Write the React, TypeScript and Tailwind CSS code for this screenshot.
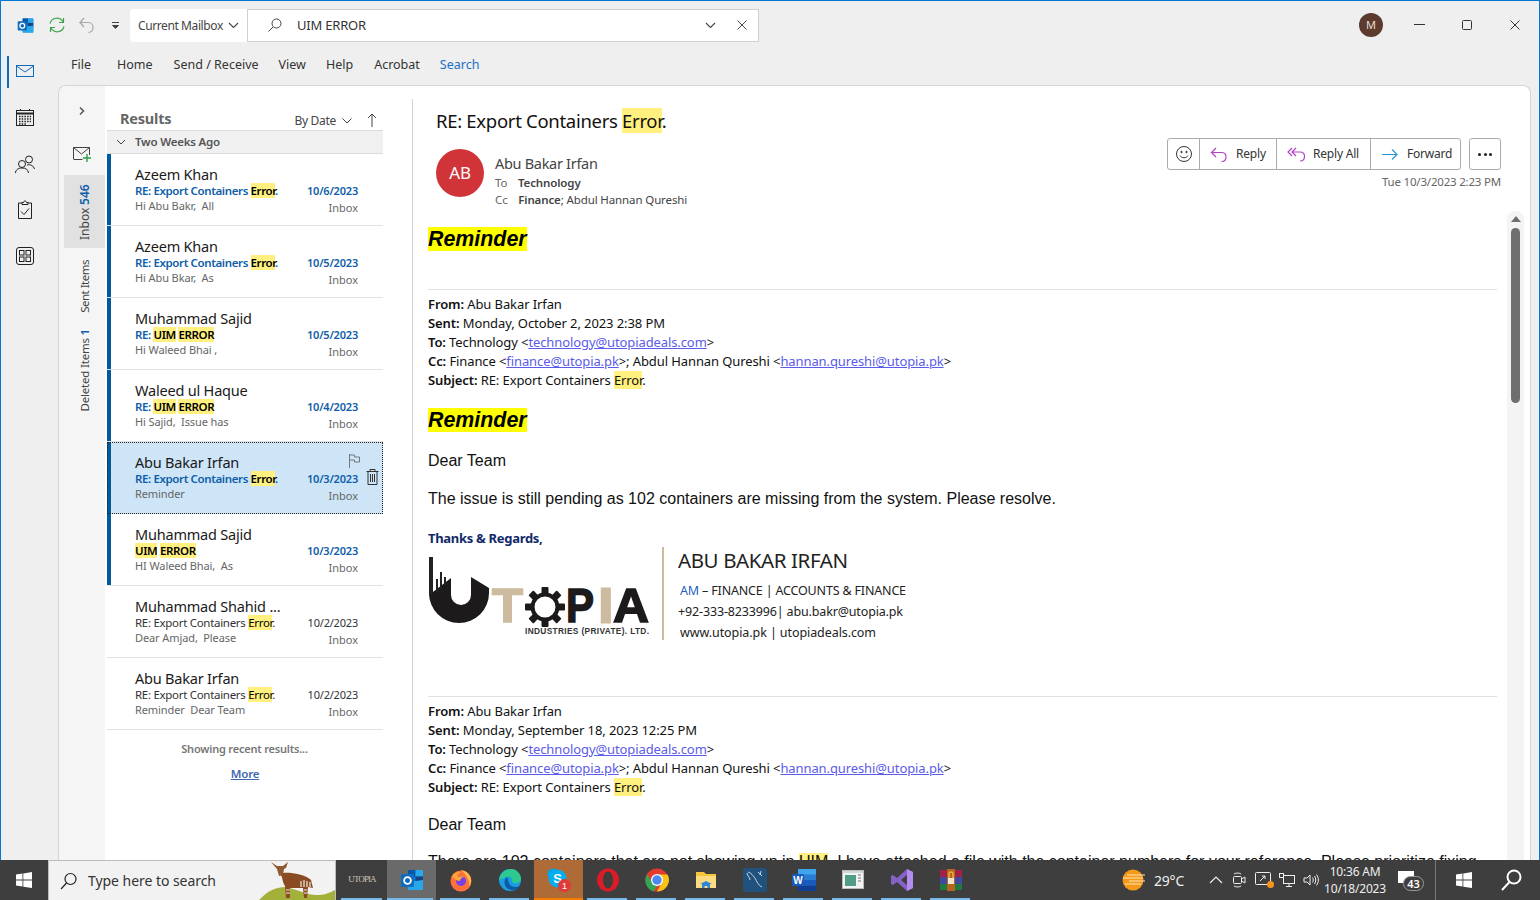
import React from "react";

type Part = { t: string; h?: boolean };
type Row = { name: string; subject: Part[]; preview: string; date: string; unread: boolean; selected?: boolean };

const exportSubject: Part[] = [{ t: "RE: Export Containers " }, { t: "Error", h: true }, { t: "." }];
const uimSubject: Part[] = [{ t: "RE: " }, { t: "UIM", h: true }, { t: " " }, { t: "ERROR", h: true }];

const rows: Row[] = [
  { name: "Azeem Khan", subject: exportSubject, preview: "Hi Abu Bakr,  All", date: "10/6/2023", unread: true },
  { name: "Azeem Khan", subject: exportSubject, preview: "Hi Abu Bkar,  As", date: "10/5/2023", unread: true },
  { name: "Muhammad Sajid", subject: uimSubject, preview: "Hi Waleed Bhai ,", date: "10/5/2023", unread: true },
  { name: "Waleed ul Haque", subject: uimSubject, preview: "Hi Sajid,  Issue has", date: "10/4/2023", unread: true },
  { name: "Abu Bakar Irfan", subject: exportSubject, preview: "Reminder", date: "10/3/2023", unread: true, selected: true },
  { name: "Muhammad Sajid", subject: [{ t: "UIM", h: true }, { t: " " }, { t: "ERROR", h: true }], preview: "HI Waleed Bhai,  As", date: "10/3/2023", unread: true },
  { name: "Muhammad Shahid ...", subject: exportSubject, preview: "Dear Amjad,  Please", date: "10/2/2023", unread: false },
  { name: "Abu Bakar Irfan", subject: exportSubject, preview: "Reminder  Dear Team", date: "10/2/2023", unread: false },
];

function Subject({ parts, unread }: { parts: Part[]; unread: boolean }) {
  return (
    <div className={unread ? "text-[11.5px] leading-[15px] font-semibold text-[#0f5ea8] whitespace-pre tracking-[-0.38px]" : "text-[11.5px] leading-[15px] text-[#333333] whitespace-pre tracking-[-0.3px]"}>
      {parts.map((p, i) =>
        p.h ? (
          <span key={i} className="bg-[#fff07f] text-black">
            {p.t}
          </span>
        ) : (
          <span key={i}>{p.t}</span>
        )
      )}
    </div>
  );
}

function MailRow({ r }: { r: Row }) {
  return (
    <div className={r.selected ? "relative h-[72px] flex shrink-0 bg-[#cde5f7] outline-1 outline-dotted outline-[#222222] -outline-offset-1" : "relative h-[72px] flex shrink-0 border-b border-[#e1e1e1]"}>
      <div className={r.unread ? "w-[4px] bg-[#005a9e] shrink-0" : "w-[4px] shrink-0"} />
      <div className="flex-1 pl-[24px] pt-[11px] min-w-0">
        <div className="text-[14.5px] leading-[18px] text-[#1a1a1a] tracking-[-0.2px] whitespace-pre">{r.name}</div>
        <Subject parts={r.subject} unread={r.unread} />
        <div className="text-[11px] leading-[15px] text-[#666666] whitespace-pre tracking-[-0.1px]">{r.preview}</div>
      </div>
      <div className="w-[70px] mr-[25px] pt-[29px] text-right shrink-0">
        <div className={r.unread ? "text-[11px] leading-[15px] font-semibold text-[#0f5ea8] tracking-[-0.2px]" : "text-[11px] leading-[15px] text-[#333333] tracking-[-0.2px]"}>{r.date}</div>
        <div className="mt-[2px] text-[11px] leading-[15px] text-[#666666]">Inbox</div>
      </div>
      {r.selected && (
        <>
          <svg className="absolute left-[241px] top-[11px]" width="13" height="16" viewBox="0 0 13 16" fill="none" stroke="#777777" strokeWidth="1">
            <path d="M1.5 1v14M1.5 2h5v2h5v5h-5v-2h-5" />
          </svg>
          <svg className="absolute left-[259px] top-[27px]" width="13" height="16" viewBox="0 0 13 16" fill="none" stroke="#333333" strokeWidth="1">
            <path d="M0.5 2.5h12M4 2.5v-2h5v2M2 2.5v13h9v-13M4.5 5v8M6.5 5v8M8.5 5v8" />
          </svg>
        </>
      )}
    </div>
  );
}

function Hl({ children }: { children: React.ReactNode }) {
  return <span className="bg-[#fff07f]">{children}</span>;
}

function A({ children }: { children: React.ReactNode }) {
  return <span className="text-[#5b5bea] underline">{children}</span>;
}

function MailHeaderBlock({ sent }: { sent: string }) {
  return (
    <div className="text-[13px] leading-[19px] text-[#111111] tracking-[-0.1px] whitespace-pre">
      <div><b className="font-semibold">From:</b> Abu Bakar Irfan</div>
      <div><b className="font-semibold">Sent:</b> {sent}</div>
      <div><b className="font-semibold">To:</b> Technology &lt;<A>technology@utopiadeals.com</A>&gt;</div>
      <div><b className="font-semibold">Cc:</b> Finance &lt;<A>finance@utopia.pk</A>&gt;; Abdul Hannan Qureshi &lt;<A>hannan.qureshi@utopia.pk</A>&gt;</div>
      <div><b className="font-semibold">Subject:</b> RE: Export Containers <Hl>Error</Hl>.</div>
    </div>
  );
}

function Reminder() {
  return (
    <div className="h-[26px] font-['Liberation_Sans'] text-[21.4px] leading-[26px] font-bold italic text-black">
      <span className="bg-[#ffff00]">Reminder</span>
    </div>
  );
}

function UtopiaLogo() {
  const heavy = { fontFamily: "'Liberation Sans'", fontWeight: 700, fontSize: 49, strokeWidth: 1.6 };
  return (
    <svg width="224" height="95" viewBox="0 0 224 95" className="shrink-0">
      <path d="M1 48 L23 31 L23 48 A10 10 0 0 0 43 48 L43 30 L61 41 L61 46 A30 30 0 0 1 1 46 Z" fill="#1c1a1a" />
      <path d="M1 10h4v36l-4 3zM8 32h2v13h-2zM12 25h2v17h-2zM16 30h2v8h-2z" fill="#222222" />
      <text x="64" y="75" {...heavy} fill="#cdbb9f" stroke="#cdbb9f" textLength="31" lengthAdjust="spacingAndGlyphs">T</text>
      <g transform="translate(117,60)">
        <circle r="12.500" fill="none" stroke="#1c1a1a" strokeWidth="4" />
        {[0, 45, 90, 135, 180, 225, 270, 315].map((a) => (
          <rect key={a} x="-3.500" y="-20" width="7" height="7" rx="1" fill="#1c1a1a" transform={`rotate(${a})`} />
        ))}
      </g>
      <text x="138" y="75" {...heavy} fill="#1c1a1a" stroke="#1c1a1a" textLength="28" lengthAdjust="spacingAndGlyphs">P</text>
      <text x="171" y="75" {...heavy} strokeWidth="3" fill="#cdbb9f" stroke="#cdbb9f">I</text>
      <text x="185" y="75" {...heavy} fill="#1c1a1a" stroke="#1c1a1a" textLength="36" lengthAdjust="spacingAndGlyphs">A</text>
      <text x="97" y="87" fontFamily="'Liberation Sans'" fontWeight="700" fontSize="8.300" fill="#333333" textLength="124">INDUSTRIES (PRIVATE). LTD.</text>
    </svg>
  );
}

function IconBtn({ children, cls = "h-[46px]" }: { children: React.ReactNode; cls?: string }) {
  return <div className={cls + " flex items-center justify-center"}>{children}</div>;
}

function Rail() {
  return (
    <div className="w-[57px] shrink-0 flex flex-col items-center pr-[9px]">
      <div className="relative w-full">
        <div className="absolute left-[6px] top-[-29px] w-[2px] h-[32px] bg-[#0f6cbd]" />
      </div>
      <div className="-mt-[37px] flex flex-col items-center">
        <IconBtn cls="h-[47px] pb-[1px]">
          <svg width="20" height="16" viewBox="0 0 20 16" fill="none" stroke="#0f6cbd" strokeWidth="1"><rect x="1.500" y="2.500" width="17" height="11" /><path d="M1.500 3l8.500 6 8.500-6" /></svg>
        </IconBtn>
        <IconBtn>
          <svg width="20" height="20" viewBox="0 0 20 20" fill="none" stroke="#222222" strokeWidth="1"><rect x="1.500" y="2.500" width="17" height="15" /><path d="M1.500 5.500h17" strokeWidth="2" /><path d="M5.500 1v2M14.500 1v2" /><path d="M4 8.500h12M4 11h12M4 13.500h12M4 16h8" strokeDasharray="1.500 1.200" strokeWidth="1.400" /></svg>
        </IconBtn>
        <IconBtn>
          <svg width="22" height="20" viewBox="0 0 22 20" fill="none" stroke="#222222" strokeWidth="1"><circle cx="8" cy="10" r="3.500" /><path d="M1.500 19c0-3 2.500-5 6.500-5s6 1.500 6.500 5" /><circle cx="15" cy="5.500" r="3.500" /><path d="M13 11c4-1 6.500 1 7.500 4" /></svg>
        </IconBtn>
        <IconBtn>
          <svg width="16" height="20" viewBox="0 0 16 20" fill="none" stroke="#222222" strokeWidth="1"><path d="M5 3H1.500v15.500h13V3H11" /><path d="M5 4.500V2.500h1.500c0-2 3-2 3 0H11v2z" /><path d="M4 11.500l3 3 5-6" /></svg>
        </IconBtn>
        <IconBtn>
          <svg width="18" height="18" viewBox="0 0 18 18" fill="none" stroke="#222222" strokeWidth="1"><rect x="0.500" y="0.500" width="17" height="17" rx="2.500" /><rect x="3.500" y="3.500" width="4.500" height="4.500" /><rect x="10" y="3.500" width="4.500" height="4.500" /><rect x="3.500" y="10" width="4.500" height="4.500" /><rect x="10" y="10" width="4.500" height="4.500" /></svg>
        </IconBtn>
      </div>
    </div>
  );
}

function FolderRail() {
  return (
    <div className="w-[46px] shrink-0 bg-[#f5f5f5] flex flex-col rounded-tl-[8px]">
      <div className="h-[50px] flex items-center justify-center">
        <svg width="8" height="10" viewBox="0 0 8 10" fill="none" stroke="#555555" strokeWidth="1.500"><path d="M2 1.500L5.500 5 2 8.500" /></svg>
      </div>
      <div className="h-[35px] flex items-center justify-center shrink-0">
        <svg width="20" height="18" viewBox="0 0 20 18" fill="none" strokeWidth="1"><path d="M1.500 14V2.500h16V10M1.500 14.500h9" stroke="#444444" /><path d="M1.500 2.500l8 6.500 8-6.500" stroke="#444444" /><path d="M15 9v8M11 13h8" stroke="#27a243" strokeWidth="1.400" /></svg>
      </div>
      <div className="mt-[4px] ml-[5px] h-[73px] bg-[#e1e1e1] flex items-center justify-center shrink-0">
        <div className="[writing-mode:vertical-rl] rotate-180 text-[12px] leading-[16px] text-[#444444] whitespace-pre">
          Inbox <span className="ml-[6px] font-semibold text-[#0f5ea8]">546</span>
        </div>
      </div>
      <div className="ml-[5px] h-[77px] flex items-center justify-center">
        <div className="[writing-mode:vertical-rl] rotate-180 text-[11.500px] tracking-[-0.5px] leading-[16px] text-[#444444] whitespace-pre">Sent Items</div>
      </div>
      <div className="ml-[5px] pt-[4px] flex justify-center">
        <div className="[writing-mode:vertical-rl] rotate-180 text-[11.500px] tracking-[-0.2px] leading-[16px] text-[#444444] whitespace-pre">
          Deleted Items <span className="ml-[7px] font-semibold text-[#0f5ea8]">1</span>
        </div>
      </div>
    </div>
  );
}

function ListPane() {
  return (
    <div className="w-[276px] ml-[2px] shrink-0 flex flex-col">
      <div className="h-[44px] pl-[13px] pr-[6px] flex items-end pb-[1px] shrink-0">
        <div className="text-[14.500px] leading-[22px] font-bold text-[#666666] tracking-[-0.2px]">Results</div>
        <div className="ml-auto -mb-[2px] flex items-center gap-[5px] text-[12px] leading-[20px] text-[#444444] tracking-[-0.3px]">
          By Date
          <svg width="12" height="8" viewBox="0 0 12 8" fill="none" stroke="#444444"><path d="M1.500 1.500L6 6l4.500-4.500" /></svg>
          <svg className="ml-[9px] mb-[3px]" width="10" height="14" viewBox="0 0 10 14" fill="none" stroke="#444444"><path d="M5 14V1M1 5l4-4 4 4" /></svg>
        </div>
      </div>
      <div className="h-[24px] shrink-0 bg-[#f0f0f0] border-y border-[#dcdcdc] flex items-center pl-[9px] gap-[9px]">
        <svg width="10" height="7" viewBox="0 0 10 7" fill="none" stroke="#444444"><path d="M1 1l4 4 4-4" /></svg>
        <span className="text-[11.500px] font-semibold text-[#555555] tracking-[-0.2px]">Two Weeks Ago</span>
      </div>
      {rows.map((r, i) => (
        <MailRow key={i} r={r} />
      ))}
      <div className="pt-[11px] pr-[1px] text-center text-[11px] leading-[15px] font-semibold text-[#777777] tracking-[-0.2px]">Showing recent results...</div>
      <div className="pt-[10px] text-center text-[11.500px] leading-[15px] font-semibold text-[#3f67b0] underline tracking-[-0.2px]">More</div>
    </div>
  );
}

function ActionBar() {
  return (
    <div className="flex gap-[8px]">
      <div className="h-[32px] flex border border-[#ababab] rounded-[3px] text-[12px] text-[#333333] tracking-[-0.2px]">
        <div className="w-[32px] flex items-center justify-center border-r border-[#ababab]">
          <svg width="18" height="18" viewBox="0 0 18 18" fill="none" stroke="#333333"><circle cx="9" cy="9" r="7.500" /><circle cx="6.500" cy="7" r="0.700" fill="#333333" /><circle cx="11.500" cy="7" r="0.700" fill="#333333" /><path d="M5 10.500c1.500 3 6.500 3 8 0" /></svg>
        </div>
        <div className="w-[77px] flex items-center pl-[10px] gap-[8px] border-r border-[#ababab]">
          <svg width="18" height="15" viewBox="0 0 18 15" fill="none" stroke="#b146c2" strokeWidth="1.200"><path d="M6 1L1.500 5.500 6 10M1.500 5.500h10c6 0 6 9 0 9" /></svg>
          Reply
        </div>
        <div className="w-[94px] flex items-center pl-[10px] gap-[7px] border-r border-[#ababab]">
          <svg width="19" height="15" viewBox="0 0 19 15" fill="none" stroke="#b146c2" strokeWidth="1.200"><path d="M5 1L1 5l4 4M9 1L5 5l4 4M5 5h8c6 0 6 9 0 9" /></svg>
          Reply All
        </div>
        <div className="w-[89px] flex items-center pl-[11px] gap-[9px]">
          <svg width="16" height="13" viewBox="0 0 16 13" fill="none" stroke="#2899d8" strokeWidth="1.200"><path d="M0 6.500h15M10 1.500l5 5-5 5" /></svg>
          Forward
        </div>
      </div>
      <div className="w-[32px] h-[32px] border border-[#ababab] rounded-[3px] flex items-center justify-center gap-[2.500px]">
        <div className="w-[3px] h-[3px] rounded-full bg-[#222222]" />
        <div className="w-[3px] h-[3px] rounded-full bg-[#222222]" />
        <div className="w-[3px] h-[3px] rounded-full bg-[#222222]" />
      </div>
    </div>
  );
}

function ReadingPane() {
  return (
    <div className="relative flex-1 min-w-0 mt-[13px] border-l border-[#d2d2d2] ml-[29px] flex flex-col overflow-hidden">
      <div className="h-[112px] shrink-0 relative pl-[23px]">
        <div className="pt-[5px] text-[18.500px] leading-[34px] text-[#111111] tracking-[-0.3px] whitespace-pre">
          RE: Export Containers <span className="bg-[#fff07f]">Error</span>.
        </div>
        <div className="flex mt-[11px]">
          <div className="w-[48px] h-[48px] rounded-full bg-[#d13438] text-white text-[17px] flex items-center justify-center shrink-0 tracking-[-0.2px]">AB</div>
          <div className="ml-[11px] mt-[4px]">
            <div className="text-[14.500px] leading-[21px] text-[#444444] tracking-[-0.3px]">Abu Bakar Irfan</div>
            <div className="text-[11.500px] leading-[17px] text-[#444444] tracking-[-0.12px] whitespace-pre">
              <span className="text-[#666666]">To</span>   <b className="ml-[2px] font-semibold">Technology</b>
            </div>
            <div className="text-[11.500px] leading-[17px] text-[#444444] tracking-[-0.12px] whitespace-pre">
              <span className="text-[#666666]">Cc</span>   <b className="ml-[2px] font-semibold">Finance</b>; Abdul Hannan Qureshi
            </div>
          </div>
        </div>
        <div className="absolute right-[29px] top-[39px] flex flex-col items-end">
          <ActionBar />
          <div className="mt-[3px] text-[11.500px] leading-[18px] text-[#666666] tracking-[-0.2px]">Tue 10/3/2023 2:23 PM</div>
        </div>
      </div>
      <div className="flex-1 pl-[15px] pr-[33px] pt-[15px] overflow-hidden">
        <Reminder />
        <div className="h-[37px] border-b border-[#e1e1e1] mb-[5px] mt-[1px]" />
        <MailHeaderBlock sent="Monday, October 2, 2023 2:38 PM" />
        <div className="mt-[17px]"><Reminder /></div>
        <div className="font-['Liberation_Sans'] text-[16px] leading-[20px] text-[#111111] mt-[18px]">Dear Team</div>
        <div className="font-['Liberation_Sans'] text-[16px] leading-[20px] text-[#111111] mt-[18px] whitespace-pre">The issue is still pending as 102 containers are missing from the system. Please resolve.</div>
        <div className="text-[13px] leading-[18px] font-bold text-[#12296b] mt-[20px] tracking-[-0.3px]">Thanks &amp; Regards,</div>
        <div className="flex h-[93px]">
          <UtopiaLogo />
          <div className="w-[2px] h-full bg-[#cdbb9f] ml-[10px] shrink-0" />
          <div className="pl-[14px] text-[#222222] whitespace-pre">
            <div className="text-[20.500px] leading-[27px] tracking-[-0.4px]">ABU BAKAR IRFAN</div>
            <div className="pl-[2px] text-[12.500px] leading-[21px] mt-[6px] tracking-[-0.17px]"><span className="text-[#1f5fbf]">AM</span> – FINANCE | ACCOUNTS &amp; FINANCE</div>
            <div className="text-[12.500px] leading-[21px] tracking-[-0.15px]">+92-333-8233996| abu.bakr@utopia.pk</div>
            <div className="pl-[2px] text-[12.500px] leading-[21px] tracking-[-0.08px]">www.utopia.pk | utopiadeals.com</div>
          </div>
        </div>
        <div className="h-[57px] border-b border-[#e1e1e1] mb-[5px]" />
        <MailHeaderBlock sent="Monday, September 18, 2023 12:25 PM" />
        <div className="font-['Liberation_Sans'] text-[16px] leading-[20px] text-[#111111] mt-[18px]">Dear Team</div>
        <div className="font-['Liberation_Sans'] text-[16px] leading-[20px] text-[#111111] mt-[17px] whitespace-pre">There are 102 containers that are not showing up in <Hl>UIM</Hl>. I have attached a file with the container numbers for your reference. Please prioritize fixing</div>
      </div>
      <div className="absolute right-[6px] top-[112px] bottom-0 w-[17px] bg-[#f4f4f4] rounded-t-[8px] flex flex-col items-center pt-[5px]">
        <div className="w-0 h-0 border-x-[5px] border-x-transparent border-b-[6px] border-b-[#6e6e6e]" />
        <div className="w-[9px] h-[175px] mt-[6px] rounded-[5px] bg-[#6e6e6e]" />
      </div>
    </div>
  );
}

function Win({ size = 18, color = "#ffffff" }: { size?: number; color?: string }) {
  return (
    <svg width={size} height={size} viewBox="0 0 18 18" fill={color}>
      <path d="M0 2.700L7.300 1.700V8.500H0zM8.200 1.600L18 0V8.500H8.200zM0 9.500H7.300V16.300L0 15.300zM8.200 9.500H18V18L8.200 16.500z" />
    </svg>
  );
}

function OutlookIcon({ s = 24 }: { s?: number }) {
  return (
    <svg width={s} height={s} viewBox="0 0 24 24">
      <rect x="8" y="2" width="15" height="20" rx="1" fill="#0f78d4" />
      <rect x="8" y="2" width="7.500" height="6.500" fill="#0358a7" />
      <rect x="15.500" y="2" width="7.500" height="6.500" fill="#28a8ea" />
      <rect x="15.500" y="8.500" width="7.500" height="6.500" fill="#14447d" />
      <path d="M8 14l15-2v9a1 1 0 0 1-1 1H8z" fill="#28a8ea" />
      <rect x="1" y="6" width="13" height="13" rx="1" fill="#0f6cbd" />
      <circle cx="7.500" cy="12.500" r="3.400" fill="none" stroke="#ffffff" strokeWidth="1.800" />
    </svg>
  );
}

function Slot({ children, u = true, cls = "" }: { children: React.ReactNode; u?: boolean; cls?: string }) {
  return (
    <div className={"relative w-[49px] h-full flex items-center justify-center shrink-0 " + cls}>
      {children}
      {u && <div className="absolute bottom-0 left-[4px] right-[5px] h-[2px] bg-[#76b9ed]" />}
    </div>
  );
}

function Taskbar() {
  return (
    <div className="h-[40px] shrink-0 bg-[#3e3e3e] flex items-stretch text-white">
      <div className="w-[48px] flex items-center justify-center shrink-0"><Win size={16} /></div>
      <div className="relative w-[288px] bg-[#f2f2f2] border-t border-x border-[#bdbdbd] flex items-center pl-[11px] shrink-0 overflow-hidden">
        <svg width="18" height="18" viewBox="0 0 18 18" fill="none" stroke="#222222" strokeWidth="1.200"><circle cx="10.500" cy="7" r="5.500" /><path d="M6.500 11L1 17" /></svg>
        <span className="ml-[10px] text-[14px] text-[#333333] tracking-[-0.05px]">Type here to search</span>
        <svg className="absolute right-0 bottom-0" width="76" height="40" viewBox="0 0 76 40">
          <path d="M0 40C8 32 15 27 27 27C40 30 50 36 60 35C66 35 72 32 76 30V40Z" fill="#a3b13a" />
          <path d="M24 13C30 12 46 14 52 20L54 28L49 27L48 38H45L44 28H31L31 38H27L26 26C23 22 24 17 21 14Z" fill="#8a4a22" />
          <path d="M42 21V27M45 20V27M48 21V27M51 22V27M45 30H48M45 33H48M27 30H31M27 33H31" stroke="#efe9e0" strokeWidth="1.200" />
          <path d="M12 2L18 6L24 6L29 2L27 8L25 9L24 15L20 16L18 9Z" fill="#8f5a30" />
        </svg>
      </div>
      <div className="flex items-stretch ml-[1px]">
        <Slot cls="w-[50px]">
          <span className="font-['Liberation_Serif'] text-[9px] text-[#cfc4b3] tracking-[-0.9px]">UTOPIA</span>
        </Slot>
        <Slot cls="bg-[#6a6a6a]" u={false}>
          <OutlookIcon />
          <div className="absolute bottom-0 left-0 right-[3px] h-[2px] bg-[#76b9ed]" />
        </Slot>
        <Slot>
          <svg width="24" height="24" viewBox="0 0 24 24"><circle cx="12" cy="13" r="10.500" fill="#ff7139" /><path d="M12 2c6 1 10 5 10 11 0 2-1 4-2 6 1-6-2-12-8-17z" fill="#ffbd4f" /><circle cx="12" cy="13" r="5" fill="#7542e5" /><path d="M3 8c2-3 6-5 9-4-3 1-4 3-3 5 2-1 5-1 7 0-3 0-5 2-5 4-3 0-6-2-8-5z" fill="#ffa436" /></svg>
        </Slot>
        <Slot>
          <svg width="24" height="24" viewBox="0 0 24 24"><circle cx="12" cy="12" r="11" fill="#1b9de2" /><path d="M1 12C2 5 8 1 13 1c6 0 10 5 10 10 0 3-3 4-6 4-3 0-3-2-3-3 0-3-3-4-6-3-4 1-6 3-7 3z" fill="#2dc98f" /><path d="M9 9c-3 2-4 8 1 12 5 2 9 1 12-3-4 2-10 1-11-3-1-2-1-4-2-6z" fill="#0c59a4" /></svg>
        </Slot>
        <Slot cls="bg-[#ae6a37]" u={false}>
          <svg width="26" height="26" viewBox="0 0 26 26"><circle cx="7" cy="7" r="5.500" fill="#00a6e8" /><circle cx="11.500" cy="11.500" r="9" fill="#00aff0" /><text x="11.500" y="16" textAnchor="middle" fontFamily="'Liberation Sans'" fontWeight="700" fontSize="13" fill="#ffffff">S</text><circle cx="18.500" cy="18.500" r="6.500" fill="#e23a3a" /><text x="18.500" y="22" textAnchor="middle" fontFamily="'Liberation Sans'" fontSize="9" fill="#ffffff">1</text></svg>
          <div className="absolute bottom-0 left-0 right-0 h-[2px] bg-[#f57c00]" />
        </Slot>
        <Slot>
          <svg width="24" height="24" viewBox="0 0 24 24"><ellipse cx="12" cy="12" rx="11" ry="11.500" fill="#d81d26" /><ellipse cx="12" cy="12" rx="5" ry="8.500" fill="#3e3e3e" /></svg>
        </Slot>
        <Slot>
          <svg width="24" height="24" viewBox="0 0 24 24"><circle cx="12" cy="12" r="11.500" fill="#e33b2e" /><path d="M12 6.500h10.500a11.500 11.500 0 0 1-10.500 17l5-9a6 6 0 0 0-5-8z" fill="#fbc217" /><path d="M2 6.500L8 15a5 5 0 0 0 4 3l-3.500 5.500A11.500 11.500 0 0 1 2 6.500z" fill="#35a551" /><circle cx="12" cy="12" r="6" fill="#ffffff" /><circle cx="12" cy="12" r="4.700" fill="#4a89f3" /></svg>
        </Slot>
        <Slot>
          <svg width="22" height="20" viewBox="0 0 22 20"><path d="M1 2h8l2 2h10v14H1z" fill="#f5c53c" /><path d="M1 6h20v12H1z" fill="#fbdb80" /><path d="M7 18v-4h8v4h-2.500v-2h-3v2z" fill="#2e86d8" /><path d="M5 14l6-3 6 3z" fill="#2e86d8" /></svg>
        </Slot>
        <Slot>
          <svg width="24" height="24" viewBox="0 0 24 24"><rect width="24" height="24" rx="3" fill="#21527d" /><path d="M5 4c4 1 7 6 9 10 1 2 3 4 5 5M4 5c0 3 3 4 3 7M15 4l4 4M18 3l-1 4" fill="none" stroke="#d8e2ea" strokeWidth="0.900" /></svg>
        </Slot>
        <Slot>
          <svg width="24" height="24" viewBox="0 0 24 24"><rect x="6" y="1" width="18" height="22" rx="1" fill="#2b7cd3" /><rect x="6" y="1" width="18" height="5.500" fill="#41a5ee" /><rect x="6" y="12" width="18" height="5.500" fill="#185abd" /><rect x="6" y="17.500" width="18" height="5.500" fill="#103f91" /><rect x="0" y="6" width="12" height="12" rx="1" fill="#185abd" /><text x="6" y="15.500" textAnchor="middle" fontFamily="'Liberation Sans'" fontWeight="700" fontSize="10" fill="#ffffff">W</text></svg>
        </Slot>
        <Slot>
          <svg width="22" height="20" viewBox="0 0 22 20"><rect x="0.500" y="0.500" width="21" height="18" fill="#f2f2f2" stroke="#bbbbbb" /><rect x="1" y="1" width="20" height="2" fill="#cfd8d8" /><rect x="3" y="5" width="11" height="11" fill="#4f9d86" /><path d="M16 5h3M16 8h3M16 11h3" stroke="#777777" /></svg>
        </Slot>
        <Slot>
          <svg width="24" height="24" viewBox="0 0 24 24"><path d="M17 1l6 3v16l-6 3-10-9-4 3-2-1V8l2-1 4 3z" fill="#8661c5" /><path d="M17 1l6 3v16l-6 3z" fill="#b38ef0" /><path d="M17 7v10l-6-5z" fill="#3e3e3e" /></svg>
        </Slot>
        <Slot>
          <svg width="24" height="24" viewBox="0 0 24 24"><rect x="1" y="2" width="22" height="7" fill="#a32049" /><rect x="1" y="9" width="22" height="7" fill="#3d4aa0" /><rect x="1" y="16" width="22" height="6" fill="#1d7b3f" /><rect x="8" y="1" width="8" height="22" fill="#b7651c" /><rect x="9" y="10" width="6" height="6" fill="#f0e6d0" /><path d="M10 10V6a2 2 0 0 1 4 0v4" fill="none" stroke="#e9b53a" strokeWidth="1.500" /></svg>
        </Slot>
      </div>
      <div className="ml-auto flex items-center shrink-0">
        <svg width="24" height="24" viewBox="0 0 24 24" className="mr-[9px]"><circle cx="12" cy="12" r="10.500" fill="#f59a18" /><path d="M6 7h18M2 10h20M8 13h16M4 16h16" stroke="#ffe9b8" strokeWidth="1" /></svg>
        <span className="text-[14px] w-[38px] tracking-[-0.2px] text-[#eeeeee]">29°C</span>
        <svg className="ml-[17px]" width="14" height="8" viewBox="0 0 14 8" fill="none" stroke="#eeeeee" strokeWidth="1.200"><path d="M1 7l6-6 6 6" /></svg>
        <svg className="ml-[9px]" width="14" height="16" viewBox="0 0 14 16" fill="none" stroke="#eeeeee"><rect x="1.500" y="4.500" width="8" height="7" rx="1" /><path d="M9.500 7l3.500-2v6l-3.500-2M2 2c2-1.300 5-1.300 7 0M2 14c2 1.300 5 1.300 7 0" /></svg>
        <div className="relative ml-[9px] w-[17px] h-[16px]">
          <svg width="17" height="15" viewBox="0 0 17 15" fill="none" stroke="#eeeeee"><rect x="0.500" y="0.500" width="15" height="12" rx="1" /><path d="M5 9l5-5M7 4h3v3" /></svg>
          <div className="absolute right-[-2px] bottom-0 w-[7px] h-[7px] rounded-full bg-[#f7941d]" />
        </div>
        <svg className="ml-[7px]" width="16" height="15" viewBox="0 0 16 15" fill="none" stroke="#eeeeee"><rect x="4.500" y="2.500" width="11" height="8" /><path d="M7 13.500h6M10 10.500v3" /><rect x="0.500" y="0.500" width="4" height="4" fill="#3e3e3e" /></svg>
        <svg className="ml-[8px]" width="16" height="14" viewBox="0 0 16 14" fill="none" stroke="#eeeeee"><path d="M1 5h3l3-3v10l-3-3H1z" /><path d="M9.500 4.500c1 1.500 1 3.500 0 5M11.500 3c1.700 2.500 1.700 5.500 0 8M13.500 1.500c2.500 3.500 2.500 7.500 0 11" /></svg>
        <div className="ml-[1px] w-[70px] text-center text-[#eeeeee] text-[12px] leading-[17px] tracking-[-0.2px]">
          <div>10:36 AM</div>
          <div>10/18/2023</div>
        </div>
        <div className="relative ml-[8px] w-[24px] h-[24px]">
          <div className="absolute left-0 top-[3px] w-[16px] h-[12px] bg-white" />
          <div className="absolute left-[5px] top-[8px] w-[21px] h-[15px] rounded-full bg-[#3e3e3e] border border-[#9a9a9a] text-[11px] leading-[13px] text-center text-white font-semibold">43</div>
        </div>
        <div className="ml-[13px] w-px h-full bg-[#7a7a7a]" />
        <div className="w-[56px] flex items-center justify-center"><Win size={16} /></div>
        <div className="w-[48px] flex items-center justify-center pr-[8px]">
          <svg width="24" height="24" viewBox="0 0 24 24" fill="none" stroke="#ffffff" strokeWidth="2"><circle cx="14" cy="9" r="6.500" /><path d="M9.500 14L2 22" /></svg>
        </div>
      </div>
    </div>
  );
}

function TitleBar() {
  return (
    <div className="h-[48px] shrink-0 flex items-center relative">
      <div className="w-[16px]" />
      <OutlookIcon s={17} />
      <svg className="ml-[14px]" width="18" height="18" viewBox="0 0 18 18" fill="none" stroke="#3da44d" strokeWidth="1.200"><path d="M2 7.500a7 7 0 0 1 13-1.500M16 10.500a7 7 0 0 1-13 1.500M15.500 2v4.500H11M2.500 16v-4.500H7" /></svg>
      <svg className="ml-[13px]" width="16" height="17" viewBox="0 0 16 17" fill="none" stroke="#a6a6a6" strokeWidth="1.200"><path d="M5 1L1 5.500h8.500c6 0 6 10 0 10M1 5.500L5 10" /></svg>
      <svg className="ml-[16px]" width="9" height="9" viewBox="0 0 9 9" fill="none" stroke="#444444"><path d="M1 1.500h7" /><path d="M1.500 4.500L4.500 7.500 7.500 4.500z" fill="#444444" /></svg>
      <div className="ml-[10px] w-[117px] h-[33px] bg-white rounded-l-[4px] flex items-center pl-[8px] text-[12px] text-[#444444] tracking-[-0.4px] gap-[5px] whitespace-pre">
        <span className="pt-[1px]">Current Mailbox</span>
        <svg width="11" height="7" viewBox="0 0 11 7" fill="none" stroke="#444444" strokeWidth="1.100"><path d="M1 1l4.500 4.500L10 1" /></svg>
      </div>
      <div className="w-[512px] h-[33px] bg-white border border-[#d0d0d0] flex items-center pl-[20px] text-[13px] text-[#333333] tracking-[-0.2px]">
        <svg width="14" height="14" viewBox="0 0 14 14" fill="none" stroke="#444444"><circle cx="8.500" cy="5.500" r="4.500" /><path d="M5 9l-4.500 4.500" /></svg>
        <span className="ml-[15px] pt-[2px]">UIM ERROR</span>
        <svg className="ml-auto mr-[21px]" width="11" height="7" viewBox="0 0 11 7" fill="none" stroke="#444444" strokeWidth="1.100"><path d="M1 1l4.500 4.500L10 1" /></svg>
        <svg className="mr-[11px]" width="10" height="10" viewBox="0 0 10 10" fill="none" stroke="#444444"><path d="M0.500 0.500l9 9M9.500 0.500l-9 9" /></svg>
      </div>
      <div className="ml-auto w-[24px] h-[24px] rounded-full bg-[#5d3a2e] text-[#e4ddd8] text-[11px] flex items-center justify-center mr-[31px]">M</div>
      <svg className="mr-[37px]" width="11" height="2" viewBox="0 0 11 2" fill="none" stroke="#333333"><path d="M0 0.500h11" /></svg>
      <svg className="mr-[38px]" width="10" height="10" viewBox="0 0 10 10" fill="none" stroke="#333333"><rect x="0.500" y="0.500" width="9" height="9" rx="1" /></svg>
      <svg className="mr-[19px]" width="10" height="10" viewBox="0 0 10 10" fill="none" stroke="#333333"><path d="M0.500 0.500l9 9M9.500 0.500l-9 9" /></svg>
    </div>
  );
}

function Tabs() {
  return (
    <div className="h-[36px] shrink-0 flex items-center pl-[70px] pb-[4px] text-[12.500px] text-[#333333]">
      <span className="mr-[26px]">File</span>
      <span className="mr-[21px]">Home</span>
      <span className="mr-[20px]">Send / Receive</span>
      <span className="mr-[20px]">View</span>
      <span className="mr-[21px]">Help</span>
      <span className="mr-[20px]">Acrobat</span>
      <span className="text-[#1b6ec2]">Search</span>
    </div>
  );
}

export default function App() {
  return (
    <div className="w-[1540px] h-[900px] overflow-hidden flex flex-col bg-[#efefef] font-['Noto_Sans',sans-serif]">
      <div className="flex-1 min-h-0 flex flex-col border-x border-t border-[#0078d4]">
        <TitleBar />
        <Tabs />
        <div className="flex-1 min-h-0 flex">
          <Rail />
          <div className="flex-1 min-w-0 mr-[8px] bg-white border-l border-t border-r border-[#d5d5d5] rounded-t-[8px] flex overflow-hidden">
            <FolderRail />
            <ListPane />
            <ReadingPane />
          </div>
        </div>
      </div>
      <Taskbar />
    </div>
  );
}
